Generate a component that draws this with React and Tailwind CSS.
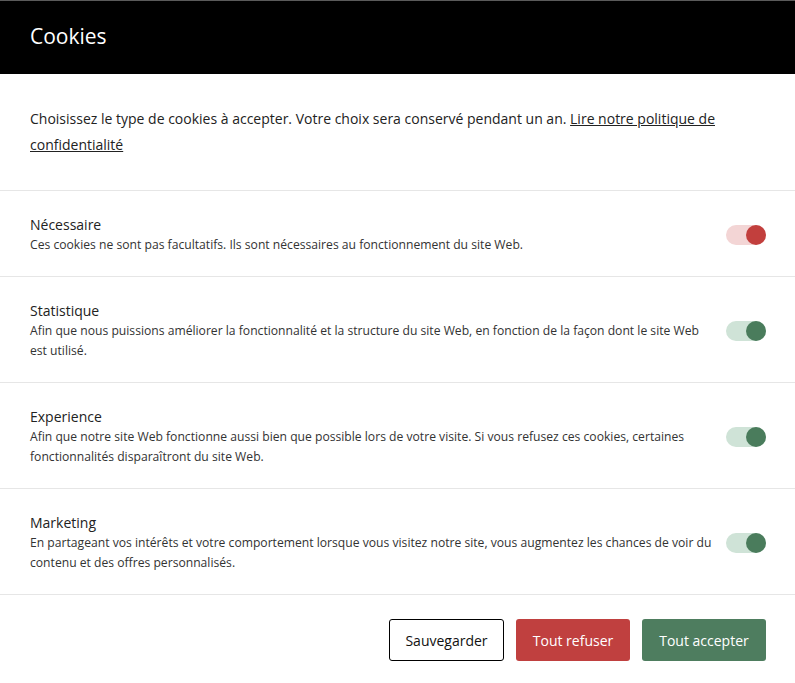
import React from "react";

const rows = [
  {
    title: "Nécessaire",
    desc: "Ces cookies ne sont pas facultatifs. Ils sont nécessaires au fonctionnement du site Web.",
    color: "red",
  },
  {
    title: "Statistique",
    desc: "Afin que nous puissions améliorer la fonctionnalité et la structure du site Web, en fonction de la façon dont le site Web est utilisé.",
    color: "green",
  },
  {
    title: "Experience",
    desc: "Afin que notre site Web fonctionne aussi bien que possible lors de votre visite. Si vous refusez ces cookies, certaines fonctionnalités disparaîtront du site Web.",
    color: "green",
  },
  {
    title: "Marketing",
    desc: "En partageant vos intérêts et votre comportement lorsque vous visitez notre site, vous augmentez les chances de voir du contenu et des offres personnalisés.",
    color: "green",
  },
];

function Toggle({ color }) {
  const track = color === "red" ? "bg-[#f3d5d5]" : "bg-[#cfe3d7]";
  const knob = color === "red" ? "bg-[#c23f3d]" : "bg-[#4a7c5c]";
  return (
    <div className={`relative w-[40px] h-[20px] rounded-full shrink-0 ${track}`}>
      <div className={`absolute right-0 top-0 w-[20px] h-[20px] rounded-full ${knob}`} />
    </div>
  );
}

export default function App() {
  return (
    <div
      className="w-[795px] min-h-[683px] bg-white text-[#222]"
      style={{ fontFamily: '"Open Sans", sans-serif' }}
    >
      <div className="border-t border-[#5a5a5a] bg-black h-[74px] flex items-center px-[30px]">
        <h1 className="text-white text-[21px] leading-none pb-[2px]">Cookies</h1>
      </div>
      <div className="px-[30px] pt-[32px] pb-[32px] border-b border-[#e6e6e6]">
        <p className="text-[14px] leading-[26px] text-[#222]">
          Choisissez le type de cookies à accepter. Votre choix sera conservé pendant un an.{" "}
          <a className="underline">Lire notre politique de confidentialité</a>
        </p>
      </div>
      {rows.map((r) => (
        <div
          key={r.title}
          className="flex items-center gap-[11px] pl-[30px] pr-[29px] pt-[24px] pb-[21px] border-b border-[#e6e6e6]"
        >
          <div className="flex-1">
            <div className="text-[14px] leading-[20px] text-[#222]">{r.title}</div>
            <div className="text-[12.15px] leading-[20px] text-[#333]">{r.desc}</div>
          </div>
          <Toggle color={r.color} />
        </div>
      ))}
      <div className="flex justify-end gap-[12px] pr-[29px] pt-[24px] pb-[22px]">
        <button className="h-[42px] w-[115px] border border-black rounded-[3px] text-[14px] text-[#111] bg-white">
          Sauvegarder
        </button>
        <button className="h-[42px] w-[114px] rounded-[3px] text-[14px] text-white bg-[#c0403f]">
          Tout refuser
        </button>
        <button className="h-[42px] w-[124px] rounded-[3px] text-[14px] text-white bg-[#4e7d5f]">
          Tout accepter
        </button>
      </div>
    </div>
  );
}
